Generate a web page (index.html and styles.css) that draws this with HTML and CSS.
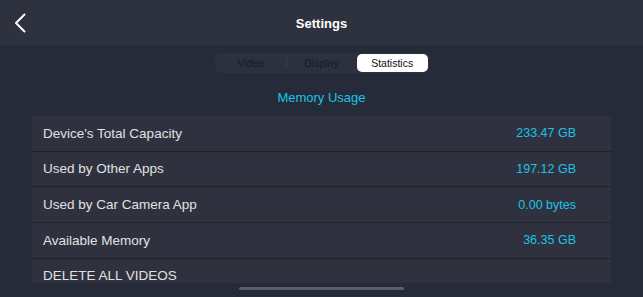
FILE: index.html
```html
<!DOCTYPE html>
<html lang="en">
<head>
  <meta charset="UTF-8" />
  <meta name="viewport" content="width=device-width, initial-scale=1.0"/>
  <title>Settings</title>
  <link rel="stylesheet" href="styles.css">
</head>
<body>
  <header class="topbar">
    <button class="back" aria-label="Back">
      <svg width="12" height="20" viewBox="0 0 12 20">
        <path d="M10.5 1.5 L2 10 L10.5 18.5" fill="none" stroke="#fff" stroke-width="2" stroke-linecap="round" stroke-linejoin="round"/>
      </svg>
    </button>
    <h1>Settings</h1>
  </header>

  <main class="content">
    <div class="segments">
      <span class="seg">Video</span>
      <span class="seg">Display</span>
      <span class="seg active">Statistics</span>
    </div>

    <h2 class="section-title">Memory Usage</h2>

    <div class="table">
      <div class="row"><span class="label">Device's Total Capacity</span><span class="value">233.47 GB</span></div>
      <div class="row"><span class="label">Used by Other Apps</span><span class="value">197.12 GB</span></div>
      <div class="row"><span class="label">Used by Car Camera App</span><span class="value">0.00 bytes</span></div>
      <div class="row"><span class="label">Available Memory</span><span class="value">36.35 GB</span></div>
      <div class="row"><span class="label">DELETE ALL VIDEOS</span></div>
    </div>
  </main>

  <div class="home-indicator"></div>
</body>
</html>
```

FILE: styles.css
```css
* {
  box-sizing: border-box;
}

html, body {
  height: 100%;
}

body {
  margin: 0;
  font-family: 'Liberation Sans', Arial, sans-serif;
  background: #252b39;
  color: #e2e3e6;
  overflow: hidden;
  position: relative;
}

.topbar {
  height: 46px;
  background: #2e323f;
  display: flex;
  align-items: center;
  justify-content: center;
  position: relative;
}

.topbar h1 {
  margin: 0;
  font-size: 13px;
  font-weight: bold;
  color: #fff;
}

.back {
  position: absolute;
  left: 14px;
  top: 13px;
  padding: 0;
  border: none;
  background: none;
  display: flex;
}

.content {
  display: flex;
  flex-direction: column;
  align-items: center;
  padding-top: 7px;
}

.segments {
  display: flex;
  width: 214px;
  height: 20px;
  padding: 1px;
  border-radius: 6px;
  background: #2c313e;
}

.seg {
  flex: 1;
  display: flex;
  align-items: center;
  justify-content: center;
  font-size: 10.5px;
  color: #181b22;
  position: relative;
}

.seg + .seg::before {
  content: "";
  position: absolute;
  left: 0;
  top: 4px;
  bottom: 4px;
  width: 1px;
  background: #3a3f4b;
}

.seg.active {
  background: #fff;
  border-radius: 5px;
  color: #111;
}

.seg.active::before {
  display: none;
}

.section-title {
  margin: 17px 0 0;
  height: 18px;
  font-size: 13px;
  font-weight: normal;
  color: #1bc3e6;
}

.table {
  margin-top: 8px;
  width: 579px;
  height: 167px;
  overflow: hidden;
}

.row {
  height: 35.67px;
  display: flex;
  align-items: center;
  justify-content: space-between;
  padding: 0 35px 0 11px;
  background: #2f323e;
  border-bottom: 1px solid #20232c;
  font-size: 13.5px;
  color: #e0e1e4;
}

.value {
  font-size: 12.5px;
  color: #1bc3e6;
}

.home-indicator {
  position: absolute;
  left: 239px;
  top: 287px;
  width: 165px;
  height: 3px;
  border-radius: 2px;
  background: #5b5e66;
}
```
